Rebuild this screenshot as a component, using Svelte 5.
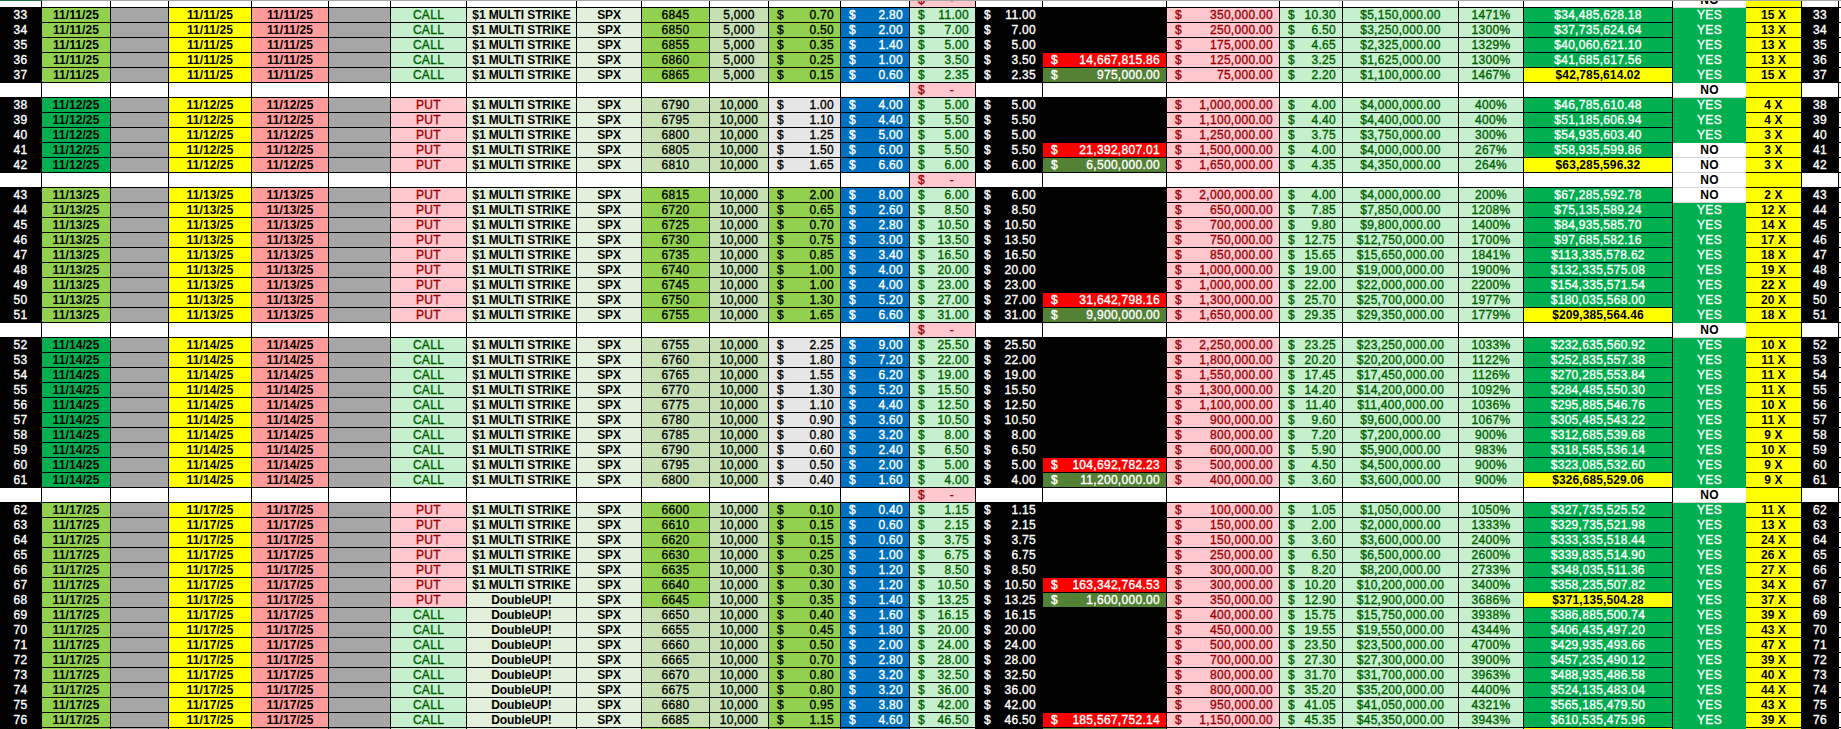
<script>
  const raw = `33|6845|5,000|0.70|2.80|11.00||350,000.00|10.30|5,150,000.00|1471|34,485,628.18|Y|15
34|6850|5,000|0.50|2.00|7.00||250,000.00|6.50|3,250,000.00|1300|37,735,624.64|Y|13
35|6855|5,000|0.35|1.40|5.00||175,000.00|4.65|2,325,000.00|1329|40,060,621.10|Y|13
36|6860|5,000|0.25|1.00|3.50|r14,667,815.86|125,000.00|3.25|1,625,000.00|1300|41,685,617.56|Y|13
37|6865|5,000|0.15|0.60|2.35|o975,000.00|75,000.00|2.20|1,100,000.00|1467|42,785,614.02|Y|15
-
38|6790|10,000|1.00|4.00|5.00||1,000,000.00|4.00|4,000,000.00|400|46,785,610.48|Y|4
39|6795|10,000|1.10|4.40|5.50||1,100,000.00|4.40|4,400,000.00|400|51,185,606.94|Y|4
40|6800|10,000|1.25|5.00|5.00||1,250,000.00|3.75|3,750,000.00|300|54,935,603.40|Y|3
41|6805|10,000|1.50|6.00|5.50|r21,392,807.01|1,500,000.00|4.00|4,000,000.00|267|58,935,599.86|N|3
42|6810|10,000|1.65|6.60|6.00|o6,500,000.00|1,650,000.00|4.35|4,350,000.00|264|63,285,596.32|N|3
-
43|6815|10,000|2.00|8.00|6.00||2,000,000.00|4.00|4,000,000.00|200|67,285,592.78|N|2
44|6720|10,000|0.65|2.60|8.50||650,000.00|7.85|7,850,000.00|1208|75,135,589.24|Y|12
45|6725|10,000|0.70|2.80|10.50||700,000.00|9.80|9,800,000.00|1400|84,935,585.70|Y|14
46|6730|10,000|0.75|3.00|13.50||750,000.00|12.75|12,750,000.00|1700|97,685,582.16|Y|17
47|6735|10,000|0.85|3.40|16.50||850,000.00|15.65|15,650,000.00|1841|113,335,578.62|Y|18
48|6740|10,000|1.00|4.00|20.00||1,000,000.00|19.00|19,000,000.00|1900|132,335,575.08|Y|19
49|6745|10,000|1.00|4.00|23.00||1,000,000.00|22.00|22,000,000.00|2200|154,335,571.54|Y|22
50|6750|10,000|1.30|5.20|27.00|r31,642,798.16|1,300,000.00|25.70|25,700,000.00|1977|180,035,568.00|Y|20
51|6755|10,000|1.65|6.60|31.00|o9,900,000.00|1,650,000.00|29.35|29,350,000.00|1779|209,385,564.46|Y|18
-
52|6755|10,000|2.25|9.00|25.50||2,250,000.00|23.25|23,250,000.00|1033|232,635,560.92|Y|10
53|6760|10,000|1.80|7.20|22.00||1,800,000.00|20.20|20,200,000.00|1122|252,835,557.38|Y|11
54|6765|10,000|1.55|6.20|19.00||1,550,000.00|17.45|17,450,000.00|1126|270,285,553.84|Y|11
55|6770|10,000|1.30|5.20|15.50||1,300,000.00|14.20|14,200,000.00|1092|284,485,550.30|Y|11
56|6775|10,000|1.10|4.40|12.50||1,100,000.00|11.40|11,400,000.00|1036|295,885,546.76|Y|10
57|6780|10,000|0.90|3.60|10.50||900,000.00|9.60|9,600,000.00|1067|305,485,543.22|Y|11
58|6785|10,000|0.80|3.20|8.00||800,000.00|7.20|7,200,000.00|900|312,685,539.68|Y|9
59|6790|10,000|0.60|2.40|6.50||600,000.00|5.90|5,900,000.00|983|318,585,536.14|Y|10
60|6795|10,000|0.50|2.00|5.00|r104,692,782.23|500,000.00|4.50|4,500,000.00|900|323,085,532.60|Y|9
61|6800|10,000|0.40|1.60|4.00|o11,200,000.00|400,000.00|3.60|3,600,000.00|900|326,685,529.06|Y|9
-
62|6600|10,000|0.10|0.40|1.15||100,000.00|1.05|1,050,000.00|1050|327,735,525.52|Y|11
63|6610|10,000|0.15|0.60|2.15||150,000.00|2.00|2,000,000.00|1333|329,735,521.98|Y|13
64|6620|10,000|0.15|0.60|3.75||150,000.00|3.60|3,600,000.00|2400|333,335,518.44|Y|24
65|6630|10,000|0.25|1.00|6.75||250,000.00|6.50|6,500,000.00|2600|339,835,514.90|Y|26
66|6635|10,000|0.30|1.20|8.50||300,000.00|8.20|8,200,000.00|2733|348,035,511.36|Y|27
67|6640|10,000|0.30|1.20|10.50|r163,342,764.53|300,000.00|10.20|10,200,000.00|3400|358,235,507.82|Y|34
68|6645|10,000|0.35|1.40|13.25|o1,600,000.00|350,000.00|12.90|12,900,000.00|3686|371,135,504.28|Y|37
69|6650|10,000|0.40|1.60|16.15||400,000.00|15.75|15,750,000.00|3938|386,885,500.74|Y|39
70|6655|10,000|0.45|1.80|20.00||450,000.00|19.55|19,550,000.00|4344|406,435,497.20|Y|43
71|6660|10,000|0.50|2.00|24.00||500,000.00|23.50|23,500,000.00|4700|429,935,493.66|Y|47
72|6665|10,000|0.70|2.80|28.00||700,000.00|27.30|27,300,000.00|3900|457,235,490.12|Y|39
73|6670|10,000|0.80|3.20|32.50||800,000.00|31.70|31,700,000.00|3963|488,935,486.58|Y|40
74|6675|10,000|0.80|3.20|36.00||800,000.00|35.20|35,200,000.00|4400|524,135,483.04|Y|44
75|6680|10,000|0.95|3.80|42.00||950,000.00|41.05|41,050,000.00|4321|565,185,479.50|Y|43
76|6685|10,000|1.15|4.60|46.50|r185,567,752.14|1,150,000.00|45.35|45,350,000.00|3943|610,535,475.96|Y|39`;

  function info(n) {
    if (n <= 37) return { date: '11/11/25', dark: false, call: true, strong: true, costGray: false };
    if (n <= 42) return { date: '11/12/25', dark: true, call: false, strong: false, costGray: true };
    if (n <= 51) return { date: '11/13/25', dark: false, call: false, strong: true, costGray: false };
    if (n <= 61) return { date: '11/14/25', dark: true, call: true, strong: false, costGray: true };
    if (n <= 68) return { date: '11/17/25', dark: false, call: false, strong: true, costGray: false };
    return { date: '11/17/25', dark: false, call: true, strong: false, costGray: false };
  }

  const rows = raw.split('\n').map((line) => {
    if (line === '-') return { sep: true };
    const f = line.split('|');
    const n = +f[0];
    return {
      n,
      ...info(n),
      label: n >= 68 ? 'DoubleUP!' : '$1 MULTI STRIKE',
      strike: f[1], qty: f[2], cost: f[3], blue: f[4], val: f[5],
      kind: f[6][0] || '', extra: f[6].slice(1),
      loss: f[7], gain: f[8], gainTotal: f[9], pct: f[10], total: f[11],
      yes: f[12] === 'Y', x: f[13]
    };
  });
  const leading = new Array(13).fill(0);
  const trailing = new Array(7).fill(0);
</script>

{#snippet money(cls, value)}
  <div class="cell money {cls}"><span>$</span><span>{value}</span></div>
{/snippet}

{#snippet sepRow()}
  <div class="row">
    {#each leading as _}<div class="cell blank"></div>{/each}
    <div class="cell money pink dashcell"><span>$</span><span>-</span></div>
    {#each trailing as _}<div class="cell blank"></div>{/each}
    <div class="cell no">NO</div>
    <div class="cell yellow"></div>
    <div class="cell blank"></div>
    <div class="cell blank end"></div>
  </div>
{/snippet}

<div class="page">
  <div class="topbar"><div class="tab"></div></div>
  <div class="sheet">
    {@render sepRow()}
    {#each rows as r}
      {#if r.sep}
        {@render sepRow()}
      {:else}
        <div class="row">
          <div class="cell black">{r.n}</div>
          <div class="cell b {r.dark ? 'dgreen' : 'lgreen'}">{r.date}</div>
          <div class="cell gray"></div>
          <div class="cell b yellow">{r.date}</div>
          <div class="cell b salmon">{r.date}</div>
          <div class="cell gray"></div>
          <div class="cell {r.call ? 'gtext' : 'rtext'}">{r.call ? 'CALL' : 'PUT'}</div>
          <div class="cell b mist label">{r.label}</div>
          <div class="cell b mist label">SPX</div>
          <div class="cell {r.strong ? 'lgreen' : 'sage'}">{r.strike}</div>
          <div class="cell sage">{r.qty}</div>
          {@render money(r.costGray ? 'silver' : 'lgreen', r.cost)}
          {@render money('blue', r.blue)}
          {@render money('gtext', r.val)}
          {@render money('black', r.val)}
          {#if r.kind}
            {@render money(r.kind === 'r' ? 'red' : 'olive', r.extra)}
          {:else}
            <div class="cell black"></div>
          {/if}
          {@render money('rtext', r.loss)}
          {@render money('gtext', r.gain)}
          <div class="cell gtext">${r.gainTotal}</div>
          <div class="cell gtext">{r.pct}%</div>
          <div class="cell {r.kind === 'o' ? 'b yellow' : 'dgreen white'}">${r.total}</div>
          <div class="cell {r.yes ? 'yes' : 'no'}">{r.yes ? 'YES' : 'NO'}</div>
          <div class="cell b yellow">{r.x} X</div>
          <div class="cell black">{r.n}</div>
          <div class="cell blank end"></div>
        </div>
      {/if}
    {/each}
    <div class="row">
      <div class="cell black"></div>
      <div class="cell lgreen"></div>
      <div class="cell gray"></div>
      <div class="cell yellow"></div>
      <div class="cell salmon"></div>
      <div class="cell gray"></div>
      <div class="cell gtext"></div>
      <div class="cell mist"></div>
      <div class="cell mist"></div>
      <div class="cell lgreen"></div>
      <div class="cell sage"></div>
      <div class="cell lgreen"></div>
      <div class="cell blue"></div>
      <div class="cell gtext"></div>
      <div class="cell black"></div>
      <div class="cell olive"></div>
      <div class="cell rtext"></div>
      <div class="cell gtext"></div>
      <div class="cell gtext"></div>
      <div class="cell gtext"></div>
      <div class="cell yellow"></div>
      <div class="cell yes"></div>
      <div class="cell yellow"></div>
      <div class="cell black"></div>
      <div class="cell blank end"></div>
    </div>
  </div>
</div>

<style>
  :global(body) { margin: 0; background: #fff; }
  .page {
    position: relative;
    width: 1841px;
    height: 729px;
    overflow: hidden;
    font-family: "Liberation Sans", Arial, sans-serif;
    font-size: 12px;
    letter-spacing: 0.3px;
    color: #000;
    -webkit-text-stroke: 0.35px currentColor;
  }
  .topbar {
    position: absolute;
    top: 0;
    left: 0;
    right: 0;
    height: 1px;
    background: #a6a6a6;
  }
  .tab { width: 42px; height: 100%; background: #217346; }
  .sheet { margin-top: -7px; }
  .row {
    display: grid;
    grid-template-columns: 42px 69px 58px 83px 77px 62px 76px 110px 65px 68px 59px 72px 69px 66px 67px 124px 113px 63px 116px 65px 149px 73px 56px 37px 3px;
    height: 15px;
  }
  .cell {
    box-sizing: border-box;
    height: 15px;
    border-right: 1px solid #000;
    border-bottom: 1px solid #000;
    display: flex;
    align-items: center;
    justify-content: center;
    line-height: 14px;
    white-space: nowrap;
    overflow: hidden;
  }
  .money { justify-content: space-between; padding: 0 6px 0 8px; }
  .dashcell { padding-right: 21px; }
  .b { font-weight: 700; -webkit-text-stroke: 0; letter-spacing: 0.1px; }
  .label { letter-spacing: -0.1px; }
  .blank { background: #fff; }
  .end { border-right: 0; }
  .black { background: #000; color: #fff; }
  .lgreen { background: #92d050; }
  .dgreen { background: #00b050; }
  .white { color: #fff; }
  .gray { background: #a6a6a6; }
  .yellow { background: #ffff00; }
  .salmon { background: #ff9b9b; }
  .mist { background: #e2efda; }
  .sage { background: #c6e0b4; }
  .silver { background: #e7e6e6; }
  .gtext { background: #c6efce; color: #006100; }
  .rtext { background: #ffc7ce; color: #9c0006; }
  .pink { background: #ffc7ce; color: #9c0006; }
  .blue { background: #0070c0; color: #fff; }
  .red { background: #ff0000; color: #fff; }
  .olive { background: #548235; color: #fff; }
  .yes { background: #00b050; color: #fff; border-right: 0; border-bottom-color: #00b050; }
  .no { background: #fff; font-weight: 700; -webkit-text-stroke: 0; border-right: 0; border-bottom-color: #d4d4d4; }
</style>
